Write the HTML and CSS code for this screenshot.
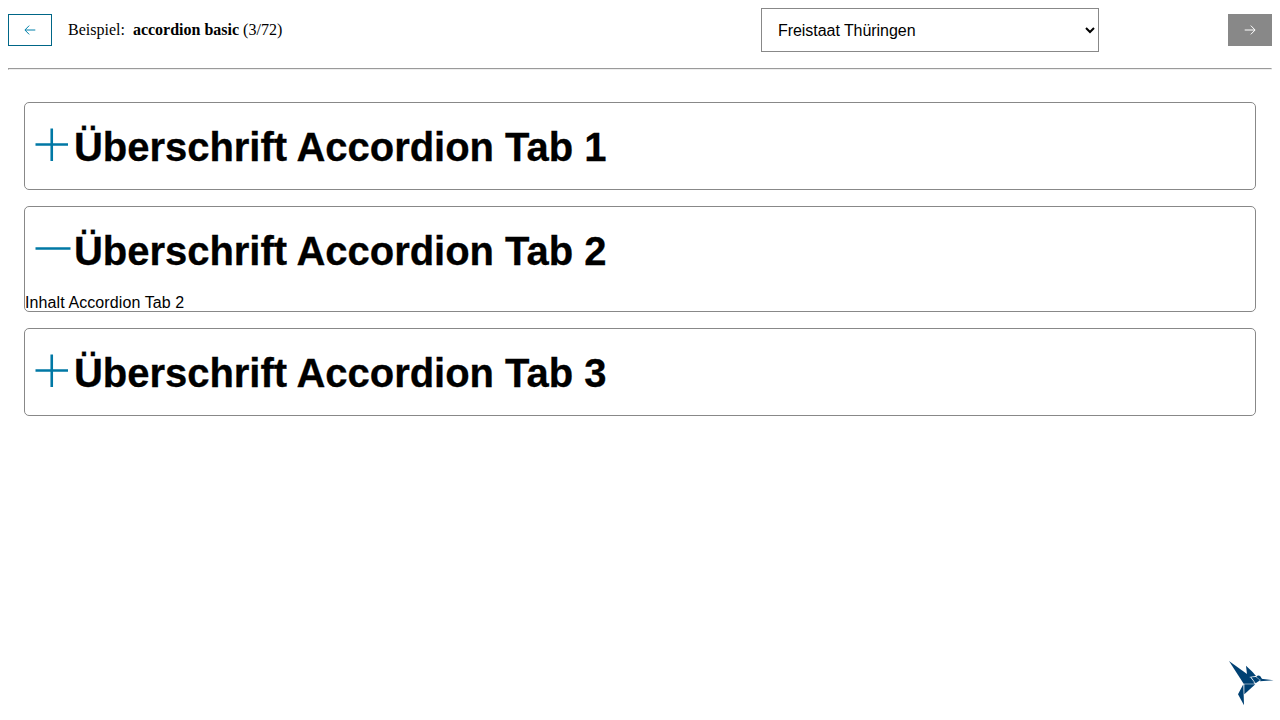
FILE: index.html
```html
<!DOCTYPE html>
<html lang="de">
<head>
<meta charset="utf-8">
<title>accordion basic</title>
<link rel="stylesheet" href="styles.css">
</head>
<body>
<header class="toolbar">
  <button class="nav-button" aria-label="zurück"><svg class="arrow" viewBox="0 0 12 12"><path d="M11.3 6H1.3M5.2 1.6L.9 6 5.2 10.4"/></svg></button>
  <div class="example">Beispiel:&nbsp; <b>accordion basic</b> (3/72)</div>
  <select class="theme-select" aria-label="Theme"><option>Freistaat Thüringen</option></select>
  <button class="nav-button nav-button-disabled" aria-label="weiter" disabled><svg class="arrow" viewBox="0 0 12 12"><path d="M.7 6H10.7M6.8 1.6L11.1 6 6.8 10.4"/></svg></button>
</header>
<hr class="divider">
<main class="accordions">
  <section class="accordion">
    <h1 class="heading"><svg class="toggle" viewBox="0 0 40 40"><path d="M2.5 18.5H35M18.75 2.5V35"/></svg><span class="heading-text">Überschrift Accordion Tab 1</span></h1>
  </section>
  <section class="accordion">
    <h1 class="heading"><svg class="toggle" viewBox="0 0 40 40"><path d="M2.5 18.5H37.5"/></svg><span class="heading-text">Überschrift Accordion Tab 2</span></h1>
    <div class="content">Inhalt Accordion Tab 2</div>
  </section>
  <section class="accordion">
    <h1 class="heading"><svg class="toggle" viewBox="0 0 40 40"><path d="M2.5 18.5H35M18.75 2.5V35"/></svg><span class="heading-text">Überschrift Accordion Tab 3</span></h1>
  </section>
</main>
<svg class="bird" viewBox="0 0 180 180" aria-label="KoliBri">
  <path d="M27 18L81 57 104 86 71 86Z"/>
  <path d="M78 32L97 50 108 63 82 67Z"/>
  <path d="M81 69L105 85 91 67Z"/>
  <path d="M94 67L108 66 120 76 107 85Z"/>
  <path d="M109 65Q115 58 121 64L126 72 120 75Z"/>
  <path d="M123 71L161 76 120 79Z"/>
  <path d="M73 88L106 88 73 118Z"/>
  <path d="M70 88L72 151 54 118Z"/>
</svg>
</body>
</html>
```
FILE: styles.css
```css
body {
  margin: 8px;
  background: #fff;
  color: #000;
  font: 16px "Liberation Serif", serif;
}
.toolbar {
  display: grid;
  grid-template-columns: 44px 709px 338px 1fr;
  align-items: center;
  height: 44px;
}
.example {
  padding-left: 16px;
}
.nav-button {
  display: flex;
  align-items: center;
  justify-content: center;
  box-sizing: border-box;
  width: 44px;
  height: 32px;
  padding: 0;
  border: 1px solid #006687;
  background: #fff;
  color: #0080aa;
}
.nav-button-disabled {
  justify-self: end;
  border-color: #888;
  background: #888;
  color: #fff;
}
.arrow {
  width: 12px;
  height: 12px;
  fill: none;
  stroke: currentColor;
  stroke-width: 1;
}
.theme-select {
  box-sizing: border-box;
  width: 338px;
  height: 44px;
  margin: 0;
  padding: 0 0 0 12px;
  border: 1px solid #888;
  border-radius: 0;
  background: #fff;
  color: #000;
  font: 16px "Liberation Sans", sans-serif;
  letter-spacing: -0.05px;
}
.divider {
  margin: 16px 0 32px;
}
.accordions {
  display: grid;
  gap: 16px;
  padding: 0 16px;
  font-family: "Liberation Sans", sans-serif;
}
.accordion {
  border: 1px solid #888;
  border-radius: 5px;
}
.heading {
  display: flex;
  height: 86px;
  margin: 0;
  padding-left: 8px;
  box-sizing: border-box;
  font-size: 40px;
  line-height: 88px;
  white-space: nowrap;
}
.heading-text {
  margin-left: 1px;
  letter-spacing: -0.04px;
  -webkit-text-stroke: 0.3px currentColor;
}
.toggle {
  flex: none;
  width: 40px;
  height: 40px;
  margin-top: 23px;
  fill: none;
  stroke: #0078a5;
  stroke-width: 2.6;
}
.content {
  height: 18px;
  line-height: 20px;
  letter-spacing: 0.1px;
}
.bird {
  position: fixed;
  right: 0;
  bottom: 5px;
  width: 60px;
  height: 60px;
  fill: #004173;
}
```
